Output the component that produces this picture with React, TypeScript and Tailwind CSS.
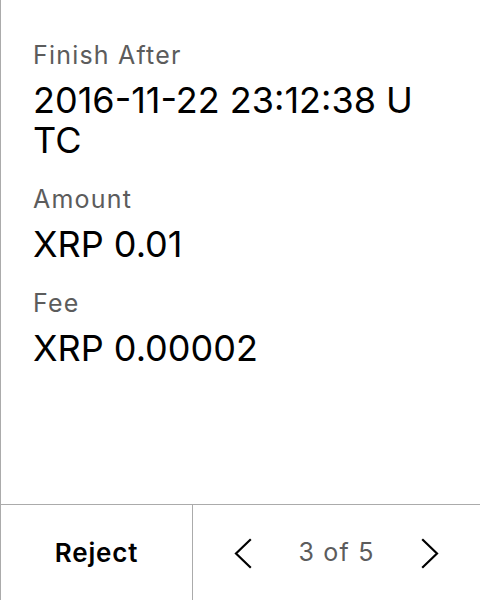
import React from 'react'

const fields = [
  { label: 'Finish After', value: '2016-11-22 23:12:38 UTC' },
  { label: 'Amount', value: 'XRP 0.01' },
  { label: 'Fee', value: 'XRP 0.00002' },
]

function Chevron({ dir }: { dir: 'left' | 'right' }) {
  return (
    <svg width="18" height="32" viewBox="0 0 18 32" fill="none" stroke="#000" strokeWidth="2.2" strokeLinecap="square">
      {dir === 'left' ? <polyline points="16,3 2,16.5 16,30" /> : <polyline points="2,3 16,16.5 2,30" />}
    </svg>
  )
}

export default function App() {
  return (
    <div
      className="flex h-[600px] w-[480px] flex-col border-l border-[#ababab] bg-white"
      style={{ fontFamily: 'Inter, "Noto Sans", sans-serif' }}
    >
      {/* Details */}
      <div className="flex-1 pl-[32px] pr-[44px] pt-[40px]">
        {fields.map((f) => (
          <div key={f.label} className="mb-[24px]">
            <div className="text-[25px] leading-[30px] tracking-[1.2px] text-[#5c5c5c]">{f.label}</div>
            <div className="mt-[10px] break-all text-[36px] leading-[40px] text-black">{f.value}</div>
          </div>
        ))}
      </div>

      {/* Footer */}
      <div className="flex h-[96px] border-t border-[#ababab]">
        <button className="flex w-[192px] items-center justify-center border-r border-[#ababab] text-[26px] font-semibold tracking-[0.8px] text-black">
          Reject
        </button>
        <div className="flex flex-1 items-center justify-between px-[41px]">
          <Chevron dir="left" />
          <span className="text-[25px] tracking-[1.2px] text-[#5c5c5c]">3 of 5</span>
          <Chevron dir="right" />
        </div>
      </div>
    </div>
  )
}
